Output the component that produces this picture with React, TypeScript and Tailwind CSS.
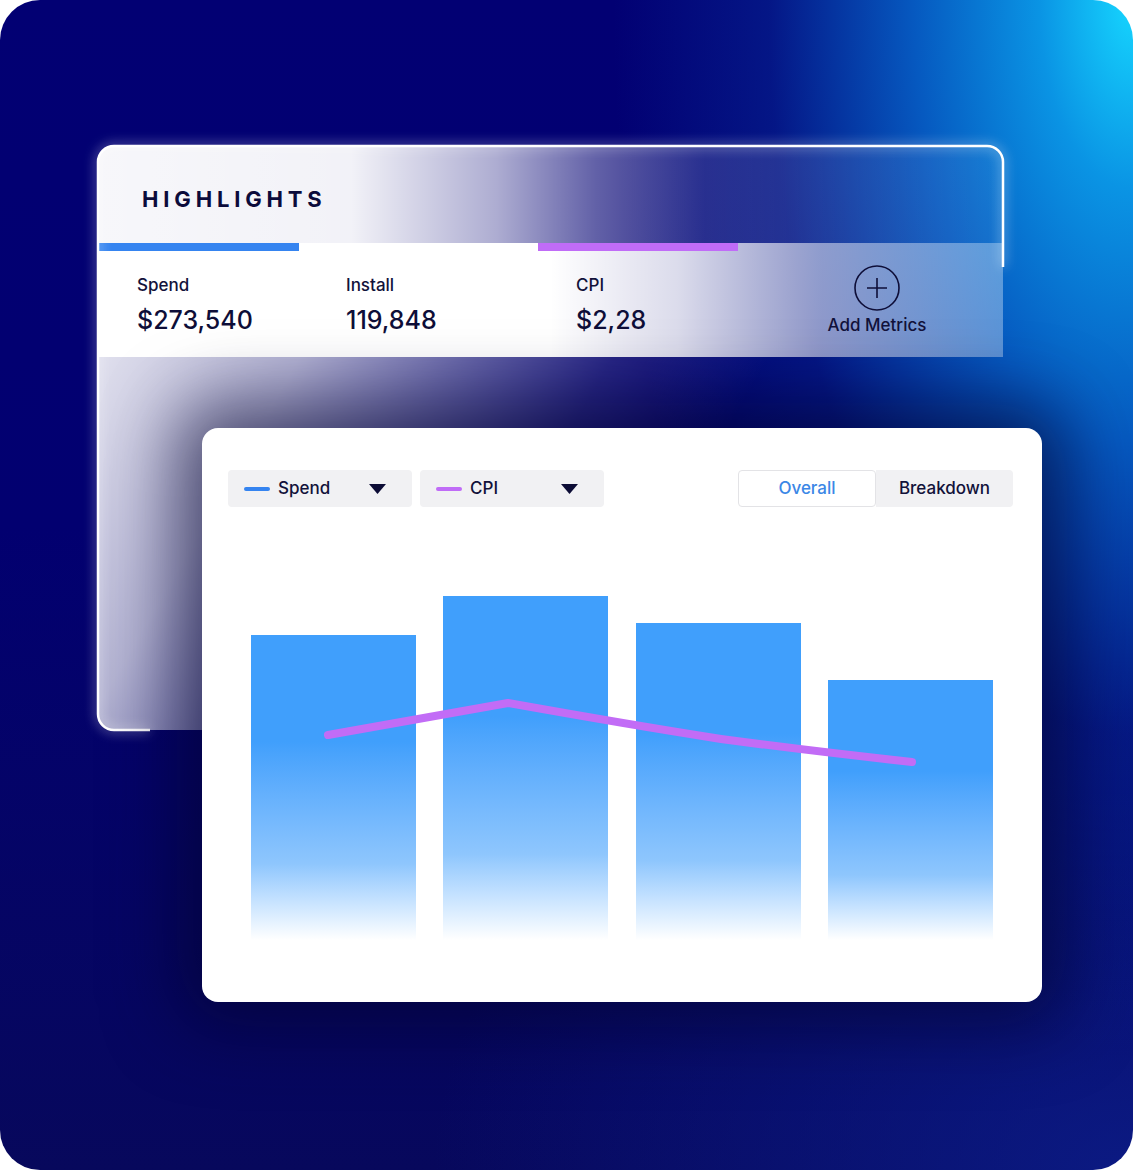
import React from 'react';

const FONT = "font-['Inter','Noto_Sans',sans-serif]";

const BARS = [305, 344, 317, 260];

function Caret() {
  return (
    <svg width="17" height="10" viewBox="0 0 17 10">
      <polygon points="0,0 17,0 8.5,10" fill="#0c0c35" />
    </svg>
  );
}

function Dropdown({ label, dash }: { label: string; dash: string }) {
  return (
    <div className="flex items-center w-[184px] h-[37px] bg-[#f1f1f3] rounded-[4px] pl-[16px] pr-[26px]">
      <span className={`w-[26px] h-[4px] rounded-full ${dash}`} />
      <span className="ml-[8px] text-[17px] font-medium text-[#12123a]">{label}</span>
      <span className="ml-auto flex">
        <Caret />
      </span>
    </div>
  );
}

function Metric({ label, value, width }: { label: string; value: string; width: string }) {
  return (
    <div className={`${width} flex flex-col`}>
      <span className="text-[17px] leading-[20px] font-medium text-[#12123a]">{label}</span>
      <span className="mt-[9px] text-[25px] leading-[32px] font-medium text-[#0e0e38]">{value}</span>
    </div>
  );
}

export default function App() {
  return (
    <div className={`min-h-screen bg-white ${FONT}`}>
      <div className="relative w-[1133px] h-[1170px] rounded-[40px] overflow-hidden pt-[146px] pl-[98px] bg-[radial-gradient(ellipse_520px_1050px_at_100%_0%,#16d6ff_0%,#0a94e4_18%,#0659c0_42%,rgba(6,40,150,0.55)_70%,rgba(6,30,130,0)_100%),radial-gradient(ellipse_700px_500px_at_100%_100%,rgba(12,30,140,0.8)_0%,rgba(12,30,140,0)_100%),linear-gradient(180deg,#020073_0%,#020070_45%,#07085c_100%)]">
        {/* back card */}
        <div className="relative w-[905px] h-[584px]">
          <div className="w-full h-full rounded-[16px] overflow-hidden flex flex-col">
            <div className="h-[97px] pl-[44px] pt-[9px] flex items-center bg-[linear-gradient(90deg,rgba(255,255,255,0.97)_0%,rgba(255,255,255,0.95)_28%,rgba(255,255,255,0.68)_44%,rgba(255,255,255,0.38)_55%,rgba(255,255,255,0.15)_67%,rgba(255,255,255,0.05)_100%)]">
              <span className="text-[22px] font-bold tracking-[0.22em] text-[#0b0b3b]">HIGHLIGHTS</span>
            </div>
            <div className="h-[114px] flex flex-col bg-[linear-gradient(90deg,#ffffff_0%,#ffffff_50%,rgba(255,255,255,0.86)_64%,rgba(255,255,255,0.55)_80%,rgba(255,255,255,0.34)_100%)]">
              <div className="flex h-[8px]">
                <span className="w-[201px] bg-[#3584f0]" />
                <span className="w-[239px]" />
                <span className="w-[200px] bg-[#c06cf7]" />
              </div>
              <div className="flex pl-[39px] pt-[14px]">
                <div className="flex pt-[10px]">
                  <Metric label="Spend" value="$273,540" width="w-[209px]" />
                  <Metric label="Install" value="119,848" width="w-[230px]" />
                  <Metric label="CPI" value="$2,28" width="w-[200px]" />
                </div>
                <div className="w-[202px] flex flex-col items-center">
                  <svg width="46" height="46" viewBox="0 0 46 46">
                    <circle cx="23" cy="23" r="22" fill="none" stroke="#0e0e38" strokeWidth="1.6" />
                    <path d="M23 13 V33 M13 23 H33" stroke="#0e0e38" strokeWidth="1.6" />
                  </svg>
                  <span className="mt-[4px] text-[17px] leading-[20px] font-medium text-[#12123a]">Add Metrics</span>
                </div>
              </div>
            </div>
            <div className="flex-1 bg-[linear-gradient(120deg,rgba(255,255,255,0.88)_0%,rgba(255,255,255,0.7)_18%,rgba(255,255,255,0.42)_32%,rgba(255,255,255,0.15)_46%,rgba(255,255,255,0)_60%)]" />
          </div>
          <svg
            className="absolute inset-0 overflow-visible pointer-events-none drop-shadow-[0_0_6px_rgba(255,255,255,0.85)]"
            width="905"
            height="584"
            viewBox="0 0 905 584"
          >
            <path
              d="M52 584 H16 A16 16 0 0 1 0 568 V16 A16 16 0 0 1 16 0 H889 A16 16 0 0 1 905 16 V121"
              fill="none"
              stroke="#ffffff"
              strokeWidth="2.5"
            />
          </svg>
        </div>

        {/* front chart card */}
        <div className="relative z-10 -mt-[302px] ml-[104px] w-[840px] h-[574px] bg-white rounded-[16px] px-[26px] pt-[42px] shadow-[0_0_70px_25px_rgba(3,3,45,0.6)]">
          <div className="flex items-center">
            <Dropdown label="Spend" dash="bg-[#3584f0]" />
            <div className="ml-[8px]">
              <Dropdown label="CPI" dash="bg-[#c06cf7]" />
            </div>
            <div className="ml-auto mr-[3px] flex h-[37px]">
              <div className="w-[138px] flex items-center justify-center border border-[#e3e3e6] rounded-[4px] bg-white text-[17px] font-medium text-[#3b87e6]">
                Overall
              </div>
              <div className="w-[137px] flex items-center justify-center bg-[#f1f1f3] rounded-r-[4px] text-[17px] font-medium text-[#12123a]">
                Breakdown
              </div>
            </div>
          </div>

          <div className="relative mx-[23px] mt-[89px] h-[344px] flex items-end justify-between">
            {BARS.map((h, i) => (
              <div
                key={i}
                className="w-[165px] bg-linear-to-b from-[#409ffc] from-35% via-[#8ec6fd] via-75% to-white"
                style={{ height: h }}
              />
            ))}
            <svg className="absolute inset-0" width="742" height="344" viewBox="0 0 742 344">
              <path
                d="M77 139 L257 107 Q380 129 470 143 Q560 155 661 166"
                fill="none"
                stroke="#c26cf6"
                strokeWidth="8"
                strokeLinecap="round"
                strokeLinejoin="round"
              />
            </svg>
          </div>
        </div>
      </div>
    </div>
  );
}
